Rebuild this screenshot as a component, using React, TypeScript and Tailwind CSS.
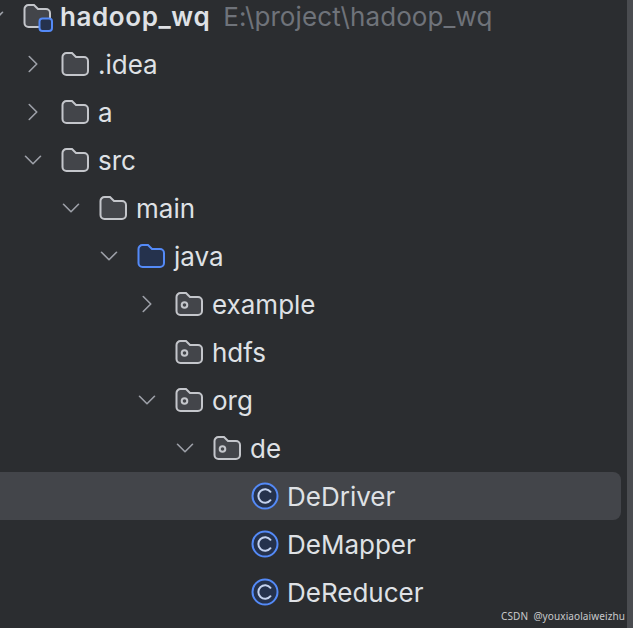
import { ChevronRight, ChevronDown } from "lucide-react";

type Kind = "root" | "folder" | "source" | "package" | "class";

type Row = {
  name: string;
  depth: number;
  kind: Kind;
  arrow?: "right" | "down";
  selected?: boolean;
};

const rows: Row[] = [
  { name: "hadoop_wq", depth: 0, kind: "root", arrow: "down" },
  { name: ".idea", depth: 1, kind: "folder", arrow: "right" },
  { name: "a", depth: 1, kind: "folder", arrow: "right" },
  { name: "src", depth: 1, kind: "folder", arrow: "down" },
  { name: "main", depth: 2, kind: "folder", arrow: "down" },
  { name: "java", depth: 3, kind: "source", arrow: "down" },
  { name: "example", depth: 4, kind: "package", arrow: "right" },
  { name: "hdfs", depth: 4, kind: "package" },
  { name: "org", depth: 4, kind: "package", arrow: "down" },
  { name: "de", depth: 5, kind: "package", arrow: "down" },
  { name: "DeDriver", depth: 6, kind: "class", selected: true },
  { name: "DeMapper", depth: 6, kind: "class" },
  { name: "DeReducer", depth: 6, kind: "class" },
];

const folderPath = "M1.5 7a4 4 0 0 1 4-4h5.5l4 4h8a4 4 0 0 1 4 4v10a4 4 0 0 1-4 4H5.5a4 4 0 0 1-4-4z";

function FolderIcon({ kind }: { kind: Kind }) {
  const stroke = kind === "source" ? "#548af7" : "#c4c6cb";
  const fill = kind === "source" ? "#25324d" : "#43454a";
  return (
    <svg width="29" height="28" viewBox="0 0 29 28" fill="none" className="shrink-0 overflow-visible">
      <path d={folderPath} fill={fill} stroke={stroke} strokeWidth="2" />
      {kind === "package" && <circle cx="9.5" cy="15" r="2.8" stroke={stroke} strokeWidth="2" />}
      {kind === "root" && (
        <rect x="16.5" y="16.5" width="12.5" height="12.5" rx="3" fill="#25324d" stroke="#548af7" strokeWidth="2" />
      )}
    </svg>
  );
}

function ClassIcon() {
  return (
    <svg width="28" height="28" viewBox="0 0 28 28" fill="none" className="shrink-0">
      <circle cx="14" cy="14" r="12.5" fill="#25324d" stroke="#548af7" strokeWidth="2" />
      <path d="M19.5 9.8a6.8 6.8 0 1 0 0 8.4" stroke="#c4d2ee" strokeWidth="2" strokeLinecap="round" />
    </svg>
  );
}

function TreeRow({ row }: { row: Row }) {
  return (
    <div className={`relative flex h-12 items-center ${row.selected ? "mr-[12px] rounded-r-lg bg-[#43454a]" : ""}`}>
      <div className="flex items-center" style={{ marginLeft: row.depth * 38 - 15 }}>
        <div className="flex w-[38px] justify-center pr-[18px] text-[#9da0a8]">
          {row.arrow === "right" && <ChevronRight size={30} strokeWidth={1.3} className="shrink-0" />}
          {row.arrow === "down" && <ChevronDown size={30} strokeWidth={1.3} className="shrink-0" />}
        </div>
        {row.kind === "class" ? <ClassIcon /> : <FolderIcon kind={row.kind} />}
        <span
          className={`ml-[8px] whitespace-nowrap pt-[1px] text-[26px] leading-none text-[#dfe1e5] ${
            row.kind === "root" ? "font-semibold tracking-[0.6px]" : ""
          }`}
        >
          {row.name}
        </span>
        {row.kind === "root" && (
          <span className="ml-[13px] whitespace-nowrap pt-[1px] text-[26px] leading-none tracking-[0.1px] text-[#6f737a]">
            E:\project\hadoop_wq
          </span>
        )}
      </div>
    </div>
  );
}

export default function App() {
  return (
    <div className="relative h-[628px] w-[633px] overflow-hidden bg-[#2b2d30] font-['Inter',sans-serif]">
      <div className="-mt-[8px]">
        {rows.map((row) => (
          <TreeRow key={row.name} row={row} />
        ))}
      </div>
      <div className="absolute right-0 top-0 h-full w-[6px] bg-[#4a4c50]" />
      <div className="absolute bottom-[7px] right-[8px] whitespace-pre font-['Noto_Sans',sans-serif] text-[10px] leading-none tracking-[0.1px] text-[#c9cacc]">
        CSDN  @youxiaolaiweizhu
      </div>
    </div>
  );
}
